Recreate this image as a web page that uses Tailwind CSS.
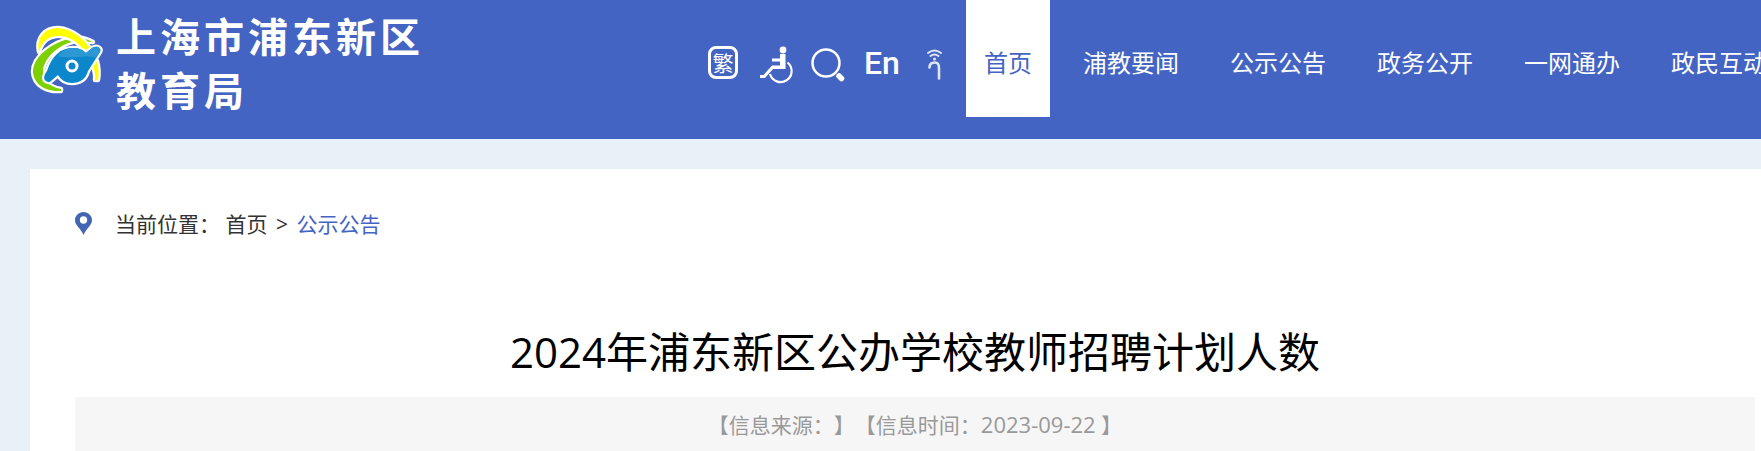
<!DOCTYPE html>
<html lang="zh-CN">
<head>
  <meta charset="UTF-8" />
  <meta name="viewport" content="width=device-width, initial-scale=1.0" />
  <title>上海市浦东新区教育局</title>

  <!-- Tailwind CSS -->
  <script src="https://cdn.jsdelivr.net/npm/@tailwindcss/browser@4"></script>
</head>
<body class="bg-[#e8f1f8] min-h-screen flex flex-col overflow-x-hidden font-['Open_Sans','Noto_Sans_CJK_SC',sans-serif] [text-spacing-trim:space-all]">

  <!-- Header -->
  <header class="bg-[#4464c3] text-white flex h-[139px] overflow-hidden whitespace-nowrap">
    <!-- Logo -->
    <a href="#" class="flex items-start shrink-0 w-[708px] pl-[31px] pt-2.5 gap-2.5">
      <svg class="mt-[15px] shrink-0 overflow-visible" width="75" height="71" viewBox="0 0 75 71" fill="none">
        <g stroke="#fff" stroke-width="4.500" stroke-linejoin="round" paint-order="stroke">
          <path d="M61 38L66 36C68 43 68 49 67 55L64 55C65 49 63 44 61 38Z" fill="#ff0"/>
          <path d="M62 17C55 13 47 12 41 13C22 17 2 31 2 47C3 60 15 67 30 66V64C18 62 12 55 12 45C14 32 28 18 47 16Z" fill="#7ed000"/>
          <path d="M8 27C5 12 14 3 27 3C42 4 56 15 64 32L58 33C52 23 45 13 30 11C18 10 11 16 8 27Z" fill="#ff0"/>
          <path d="M15 56C12 54 13 50 16 46C21 31 29 23 42 23C48 23 52 25 55 28L61 23C66 20 71 23 69 27L57 46C55 54 49 58 41 58C35 58 30 55 27 50L20 56C18 58 17 57 15 56Z" fill="#0d87cc"/>
        </g>
        <path d="M27 31C31 26 36 23 42 23C48 23 52 25 55 28L61 23C66 20 71 23 69 27L65 33C55 29 40 35 27 31Z" fill="#2b97d3"/>
        <path d="M15 20C19 15 23 14 29 14" stroke="#4464c3"/>
        <circle cx="41" cy="41" r="5" fill="#0d87cc" stroke="#fff" stroke-width="3"/>
      </svg>
      <span class="text-[40px] leading-[54px] font-bold tracking-[4px]">上海市浦东新区<br />教育局</span>
    </a>

    <!-- Tools -->
    <div class="flex items-center shrink-0 w-[258px] h-[129px]">
      <button type="button" class="mb-1 w-[30px] h-[33px] border-3 border-white rounded-lg text-[21px] leading-[26px] flex justify-center items-center">繁</button>
      <button type="button" aria-label="无障碍" class="ml-[22px]">
        <svg width="33" height="38" viewBox="0 0 33 38" fill="none" stroke="#fff">
          <circle cx="23" cy="4" r="3.4" fill="#fff" stroke="none"/>
          <path d="M20 8H25.500V23H13L5 32H0V29H3.500L12 19.500H20V15.500H12V12.500H20Z" fill="#fff" stroke="none"/>
          <path d="M27.500 16.500A11 11 0 1 1 10 28" stroke-width="2.200"/>
        </svg>
      </button>
      <button type="button" aria-label="搜索" class="ml-[18px]">
        <svg width="34" height="34" viewBox="0 0 34 34" fill="none" stroke="#fff">
          <circle cx="15" cy="15" r="13.500" stroke-width="2.500"/>
          <path d="M28 28L30.500 30.500" stroke-width="5.500" stroke-linecap="round"/>
        </svg>
      </button>
      <a href="#" class="ml-[19px] mb-1 w-[38px] font-[Roboto] font-medium text-[32px] leading-[38px]">En</a>
      <button type="button" aria-label="适老版" class="ml-[25px]">
        <svg width="15" height="31" viewBox="0 0 15 31" fill="none" stroke="#dfe5f5" stroke-linecap="round">
          <path d="M1 4Q7.500-1 14 4M3.500 7Q7.500 4 11.500 7" stroke-width="2"/>
          <circle cx="7.500" cy="10" r="1.500" fill="#dfe5f5" stroke="none"/>
          <path d="M2.500 18.500C2.500 15 5 13.500 8 13.500C11 13.500 12 16 12 19V29.500" stroke-width="2.600"/>
        </svg>
      </button>
    </div>

    <!-- Nav -->
    <nav class="flex shrink-0 gap-[15px] h-[117px] text-2xl leading-[125px]">
      <a href="#" class="px-[18px] bg-white text-[#4464c3]">首页</a>
      <a href="#" class="px-[18px]">浦教要闻</a>
      <a href="#" class="px-[18px]">公示公告</a>
      <a href="#" class="px-[18px]">政务公开</a>
      <a href="#" class="px-[18px]">一网通办</a>
      <a href="#" class="px-[18px]">政民互动</a>
    </nav>
  </header>

  <!-- Main -->
  <main class="grow bg-white mt-[30px] ml-[30px] pl-[45px] pr-1.5 pt-10">
    <nav class="flex items-center h-8 text-[21px] text-[#333]">
      <svg class="mr-[23px] mb-1" width="17" height="23" viewBox="0 0 17 23">
        <path d="M8.500 0C3.700 0 0 3.700 0 8.300C0 13.500 5.500 16 8.500 23C11.500 16 17 13.500 17 8.300C17 3.700 13.300 0 8.500 0Z" fill="#4464b4"/>
        <circle cx="8.500" cy="8" r="3.700" fill="#fff"/>
      </svg>
      <span>当前位置： <a href="#">首页</a> <span class="mx-[3px]">&gt;</span> <a href="#" class="text-[#4464c3]">公示公告</a></span>
    </nav>

    <h1 class="mt-[76px] text-[42px] leading-[70px] text-center text-black">2024年浦东新区公办学校教师招聘计划人数</h1>
    <p class="mt-2.5 bg-[#f6f6f6] text-[21px] leading-[54px] text-center text-[#999]">【信息来源：】【信息时间：<time datetime="2023-09-22" class="text-[22px]">2023-09-22</time> 】</p>
  </main>

</body>
</html>
